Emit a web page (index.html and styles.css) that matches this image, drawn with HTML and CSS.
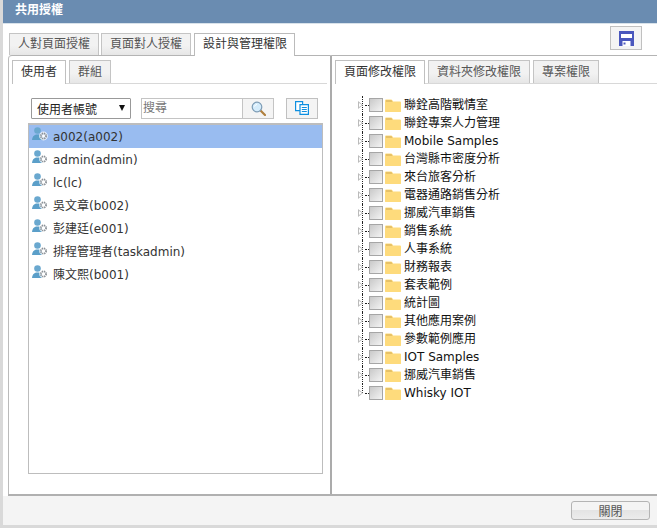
FILE: index.html
```html
<!DOCTYPE html>
<html lang="zh-Hant">
<head>
<meta charset="utf-8">
<title>共用授權</title>
<link rel="stylesheet" href="styles.css">
</head>
<body>
<svg class="defs" width="0" height="0" aria-hidden="true">
  <symbol id="user" viewBox="0 0 18 15">
    <circle cx="6.500" cy="3.500" r="3.300" fill="#6aa8cf"/>
    <path d="M1 13c0-3 2-5 4-5.500h3c2 .5 3 1.500 3 3V13z" fill="#5b9fc9"/>
    <circle cx="12.500" cy="9" r="4.400" fill="#fff" opacity=".75"/>
    <circle cx="12.500" cy="9" r="2.600" fill="none" stroke="#8a9096" stroke-width="1.800" stroke-dasharray="1.300 .75"/>
    <circle cx="12.500" cy="9" r="1.100" fill="#fff"/>
  </symbol>
  <symbol id="folder" viewBox="0 0 16 13">
    <path d="M0 12.500V1.500Q0 .5 1 .5h5q1 0 1.500 1L8 2.500h7q1 0 1 1v9q0 .5-1 .5H1q-1 0-1-.5z" fill="#fedb7c"/>
    <path d="M1 1h5.500l1 2H1z" fill="#e6c168"/>
  </symbol>
</svg>

<div class="dialog">
  <header class="titlebar">共用授權</header>
  <div class="toolbar">
    <nav class="tabs top-tabs">
      <span class="tab">人對頁面授權</span>
      <span class="tab">頁面對人授權</span>
      <span class="tab active">設計與管理權限</span>
    </nav>
    <button class="icon-btn save" type="button" aria-label="儲存">
      <svg width="15" height="15" viewBox="0 0 15 15"><path d="M0 0h15v15H0z" fill="#4a57bd"/><path d="M2 3h11v4H2z" fill="#fff"/><path d="M3.500 10h8v5h-8z" fill="#fff"/><path d="M4.500 11.500h2v2h-2z" fill="#4a57bd"/></svg>
    </button>
  </div>

  <main class="split">
    <section class="pane left">
      <nav class="tabs sub-tabs">
        <span class="tab active">使用者</span>
        <span class="tab">群組</span>
      </nav>
      <div class="filters">
        <div class="select">使用者帳號<span class="caret"></span></div>
        <div class="search">
          <span class="search-text">搜尋</span>
          <span class="search-btn">
            <svg width="15" height="15" viewBox="0 0 15 15"><path d="M9 9l5 5" stroke="#b0803f" stroke-width="2.200" stroke-linecap="round"/><circle cx="6" cy="6" r="4.800" fill="#d5ecfb" stroke="#7d9cb5" stroke-width="1.200"/><path d="M3.500 5.500a2.800 2.800 0 0 1 2.500-2" stroke="#fff" fill="none"/></svg>
          </span>
        </div>
        <button class="icon-btn copy" type="button" aria-label="複製">
          <svg width="14" height="14" viewBox="0 0 14 14" fill="#fff" stroke="#0f8fe0" stroke-width="1.200"><path d="M.6.6h7v9h-7z"/><path d="M5 3.600h8.400v9.800H5z"/><path d="M6.800 6.500h5M6.800 8.500h5M6.800 10.500h5" fill="none"/></svg>
        </button>
      </div>
      <ul class="users">
        <li class="user selected"><svg class="user-icon"><use href="#user"/></svg>a002(a002)</li>
        <li class="user"><svg class="user-icon"><use href="#user"/></svg>admin(admin)</li>
        <li class="user"><svg class="user-icon"><use href="#user"/></svg>lc(lc)</li>
        <li class="user"><svg class="user-icon"><use href="#user"/></svg>吳文章(b002)</li>
        <li class="user"><svg class="user-icon"><use href="#user"/></svg>彭建廷(e001)</li>
        <li class="user"><svg class="user-icon"><use href="#user"/></svg>排程管理者(taskadmin)</li>
        <li class="user"><svg class="user-icon"><use href="#user"/></svg>陳文熙(b001)</li>
      </ul>
    </section>
    <section class="pane right">
      <nav class="tabs sub-tabs">
        <span class="tab active">頁面修改權限</span>
        <span class="tab">資料夾修改權限</span>
        <span class="tab">專案權限</span>
      </nav>
      <ul class="tree">
        <li class="node"><span class="arrow"></span><span class="check"></span><svg class="folder"><use href="#folder"/></svg>聯銓高階戰情室</li>
        <li class="node"><span class="arrow"></span><span class="check"></span><svg class="folder"><use href="#folder"/></svg>聯銓專案人力管理</li>
        <li class="node"><span class="arrow"></span><span class="check"></span><svg class="folder"><use href="#folder"/></svg>Mobile Samples</li>
        <li class="node"><span class="arrow"></span><span class="check"></span><svg class="folder"><use href="#folder"/></svg>台灣縣市密度分析</li>
        <li class="node"><span class="arrow"></span><span class="check"></span><svg class="folder"><use href="#folder"/></svg>來台旅客分析</li>
        <li class="node"><span class="arrow"></span><span class="check"></span><svg class="folder"><use href="#folder"/></svg>電器通路銷售分析</li>
        <li class="node"><span class="arrow"></span><span class="check"></span><svg class="folder"><use href="#folder"/></svg>挪威汽車銷售</li>
        <li class="node"><span class="arrow"></span><span class="check"></span><svg class="folder"><use href="#folder"/></svg>銷售系統</li>
        <li class="node"><span class="arrow"></span><span class="check"></span><svg class="folder"><use href="#folder"/></svg>人事系統</li>
        <li class="node"><span class="arrow"></span><span class="check"></span><svg class="folder"><use href="#folder"/></svg>財務報表</li>
        <li class="node"><span class="arrow"></span><span class="check"></span><svg class="folder"><use href="#folder"/></svg>套表範例</li>
        <li class="node"><span class="arrow"></span><span class="check"></span><svg class="folder"><use href="#folder"/></svg>統計圖</li>
        <li class="node"><span class="arrow"></span><span class="check"></span><svg class="folder"><use href="#folder"/></svg>其他應用案例</li>
        <li class="node"><span class="arrow"></span><span class="check"></span><svg class="folder"><use href="#folder"/></svg>參數範例應用</li>
        <li class="node"><span class="arrow"></span><span class="check"></span><svg class="folder"><use href="#folder"/></svg>IOT Samples</li>
        <li class="node"><span class="arrow"></span><span class="check"></span><svg class="folder"><use href="#folder"/></svg>挪威汽車銷售</li>
        <li class="node last"><span class="arrow"></span><span class="check"></span><svg class="folder"><use href="#folder"/></svg>Whisky IOT</li>
      </ul>
    </section>
  </main>

  <footer class="footer">
    <button class="close" type="button">關閉</button>
  </footer>
</div>
</body>
</html>
```

FILE: styles.css
```css
* { box-sizing: border-box; }
html, body { margin: 0; height: 100%; }
body {
  background: #d9d9d9;
  font-family: "DejaVu Sans", "Noto Sans CJK TC", sans-serif;
  font-size: 12px;
  color: #222;
  overflow: hidden;
}
.defs { position: absolute; }
ul { list-style: none; margin: 0; padding: 0; }

.dialog {
  width: 654px;
  height: 525px;
  margin-left: 3px;
  background: #fff;
  display: flex;
  flex-direction: column;
}
.titlebar {
  height: 24px;
  flex: none;
  padding: 1px 0 0 12px;
  background: #6a8cb1;
  border-bottom: 1px solid #d8e2ea;
  color: #fff;
  font-weight: 700;
  font-size: 12px;
  line-height: 18px;
}
.toolbar {
  height: 31px;
  flex: none;
  display: flex;
  justify-content: space-between;
  align-items: flex-end;
  padding: 0 15px 0 6px;
}
.tabs { display: flex; }
.tab {
  display: block;
  border: 1px solid #c4c4c4;
  border-bottom: 0;
  background: linear-gradient(#f2f2f2 55%, #e6e6e6);
  color: #555;
  white-space: nowrap;
}
.tab.active { background: #fff; color: #333; border-color: #bbb; position: relative; }
.top-tabs { gap: 2px; }
.top-tabs .tab { height: 22px; padding: 0 8px; line-height: 21px; }
.top-tabs .tab.active { height: 23px; margin: 0 0 -1px 1px; padding: 0 7px 0 8px; }

.icon-btn {
  display: flex;
  align-items: center;
  justify-content: center;
  padding: 0;
  background: #f4f4f4;
  border: 1px solid #c0c0c0;
}
.save { width: 32px; height: 24px; margin-bottom: 5px; }

.split {
  flex: 1;
  min-height: 0;
  display: flex;
  border-bottom: 2px solid #b0b0b0;
  margin-left: 5px;
}
.pane {
  border-top: 1px solid #b4b4b4;
  padding-top: 4px;
  min-width: 0;
}
.left {
  width: 324px;
  flex: none;
  border-left: 1px solid #bbb;
  border-right: 2px solid #ababab;
  border-radius: 4px 0 0 0;
  padding: 4px 3px 0;
  display: flex;
  flex-direction: column;
}
.right { flex: 1; padding-left: 3px; }

.sub-tabs { gap: 3px; height: 24px; flex: none; border-bottom: 1px solid #d8d8d8; }
.sub-tabs .tab { height: 23px; padding: 0 8px; line-height: 22px; }
.sub-tabs .tab.active { height: 24px; border-color: #c0c0c0; color: #333; }

.filters {
  display: flex;
  align-items: center;
  flex: none;
  margin: 13px 0 4px 19px;
  height: 22px;
}
.select {
  width: 100px;
  height: 21px;
  border: 1px solid #999;
  border-radius: 1px;
  display: flex;
  justify-content: space-between;
  align-items: center;
  padding: 0 4px 0 5px;
  color: #222;
}
.caret {
  width: 0;
  height: 0;
  border-left: 3.500px solid transparent;
  border-right: 3.500px solid transparent;
  border-top: 6px solid #111;
  margin-right: 1px;
}
.search {
  display: flex;
  width: 133px;
  height: 21px;
  margin-left: 10px;
  border: 1px solid #c4c4c4;
}
.search-text { flex: 1; color: #777; padding-left: 1px; line-height: 19px; }
.search-btn {
  width: 31px;
  background: #f4f4f4;
  border-left: 1px solid #c4c4c4;
  display: flex;
  align-items: center;
  justify-content: center;
}
.copy { width: 32px; height: 21px; margin-left: 12px; }

.users {
  flex: none;
  width: 295px;
  height: 351px;
  margin-left: 16px;
  border: 1px solid #bdbdbd;
  border-top-width: 2px;
}
.user {
  height: 23px;
  display: flex;
  align-items: center;
  color: #333;
  line-height: 21px;
  padding: 2px 0 0 2px;
}
.user.selected { background: #99bcf0; }
.user-icon { width: 18px; height: 15px; margin: -7px 4px 0 0; flex: none; }

.tree { margin: 12px 0 0 22px; }
.node {
  position: relative;
  height: 18px;
  line-height: 18px;
  display: flex;
  align-items: center;
  color: #111;
  padding-left: 1px;
}
.node::before {
  content: "";
  position: absolute;
  left: 5px;
  top: 0;
  bottom: 0;
  border-left: 1px dotted #222;
}
.node.last::before { bottom: 9px; }
.arrow {
  position: relative;
  width: 0;
  height: 0;
  margin-right: 3px;
  border-left: 5px solid #bbb;
  border-top: 4.500px solid transparent;
  border-bottom: 4.500px solid transparent;
  z-index: 1;
  flex: none;
}
.arrow::after {
  content: "";
  position: absolute;
  left: -4px;
  top: -2.500px;
  border-left: 3px solid #fff;
  border-top: 2.500px solid transparent;
  border-bottom: 2.500px solid transparent;
}
.check {
  position: relative;
  width: 14px;
  height: 14px;
  margin-left: 3px;
  flex: none;
  border: 1px solid #a6a6a6;
  background: linear-gradient(135deg, #c9c9c9, #f4f4f4);
}
.check::before {
  content: "";
  position: absolute;
  left: -5px;
  top: 6px;
  width: 4px;
  border-top: 1px dotted #222;
}
.folder { width: 16px; height: 13px; margin: 0 3px 0 2px; flex: none; }

.footer {
  flex: none;
  height: 29px;
  display: flex;
  justify-content: flex-end;
  align-items: center;
  background: #f4f4f4;
  padding: 0 7px 0 0;
}
.close {
  width: 79px;
  height: 19px;
  padding: 0;
  font: inherit;
  color: #555;
  border: 1px solid #b4b4b4;
  border-radius: 3px;
  background: linear-gradient(#f4f4f4 45%, #e4e4e4 50%, #ececec);
}
```
